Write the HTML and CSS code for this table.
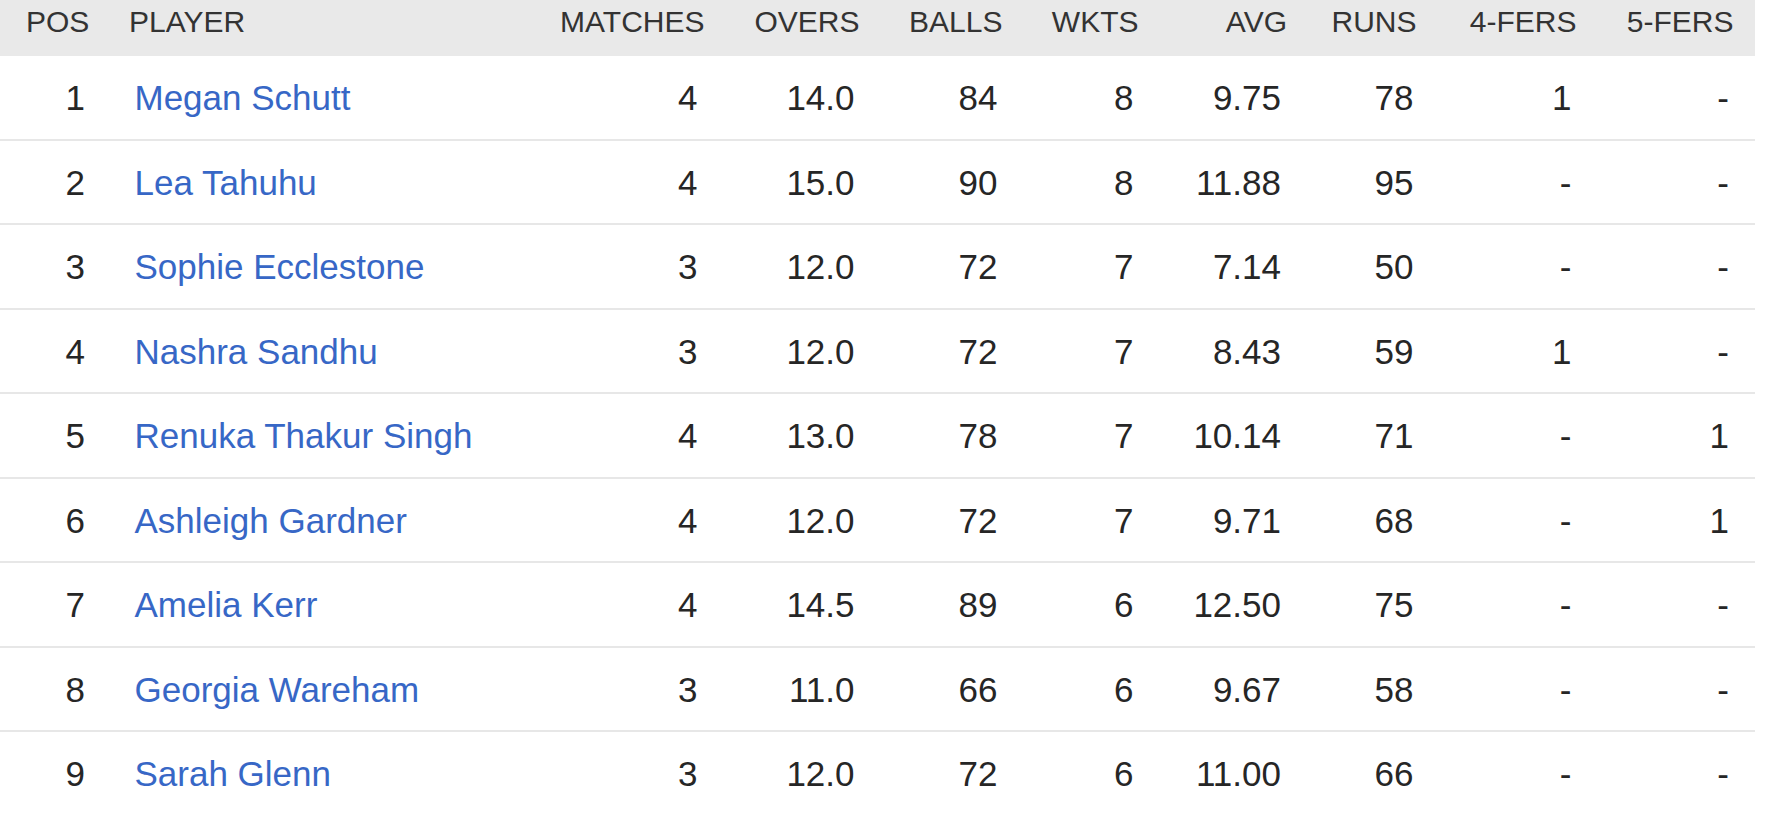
FILE: index.html
```html
<!DOCTYPE html>
<html lang="en">
<head>
<meta charset="utf-8">
<title>Most Wickets</title>
<link rel="stylesheet" href="styles.css">
</head>
<body>
<table class="stats">
  <colgroup>
    <col class="c-pos">
    <col class="c-player">
    <col class="c-matches">
    <col class="c-overs">
    <col class="c-balls">
    <col class="c-wkts">
    <col class="c-avg">
    <col class="c-runs">
    <col class="c-four">
    <col class="c-five">
  </colgroup>
  <thead>
    <tr>
      <th class="h-pos">POS</th>
      <th class="h-player">PLAYER</th>
      <th>MATCHES</th>
      <th>OVERS</th>
      <th>BALLS</th>
      <th>WKTS</th>
      <th>AVG</th>
      <th>RUNS</th>
      <th>4-FERS</th>
      <th class="last">5-FERS</th>
    </tr>
  </thead>
  <tbody>
    <tr><td class="pos">1</td><td class="player"><a href="#">Megan Schutt</a></td><td>4</td><td>14.0</td><td>84</td><td>8</td><td>9.75</td><td>78</td><td>1</td><td class="last">-</td></tr>
    <tr><td class="pos">2</td><td class="player"><a href="#">Lea Tahuhu</a></td><td>4</td><td>15.0</td><td>90</td><td>8</td><td>11.88</td><td>95</td><td>-</td><td class="last">-</td></tr>
    <tr><td class="pos">3</td><td class="player"><a href="#">Sophie Ecclestone</a></td><td>3</td><td>12.0</td><td>72</td><td>7</td><td>7.14</td><td>50</td><td>-</td><td class="last">-</td></tr>
    <tr><td class="pos">4</td><td class="player"><a href="#">Nashra Sandhu</a></td><td>3</td><td>12.0</td><td>72</td><td>7</td><td>8.43</td><td>59</td><td>1</td><td class="last">-</td></tr>
    <tr><td class="pos">5</td><td class="player"><a href="#">Renuka Thakur Singh</a></td><td>4</td><td>13.0</td><td>78</td><td>7</td><td>10.14</td><td>71</td><td>-</td><td class="last">1</td></tr>
    <tr><td class="pos">6</td><td class="player"><a href="#">Ashleigh Gardner</a></td><td>4</td><td>12.0</td><td>72</td><td>7</td><td>9.71</td><td>68</td><td>-</td><td class="last">1</td></tr>
    <tr><td class="pos">7</td><td class="player"><a href="#">Amelia Kerr</a></td><td>4</td><td>14.5</td><td>89</td><td>6</td><td>12.50</td><td>75</td><td>-</td><td class="last">-</td></tr>
    <tr><td class="pos">8</td><td class="player"><a href="#">Georgia Wareham</a></td><td>3</td><td>11.0</td><td>66</td><td>6</td><td>9.67</td><td>58</td><td>-</td><td class="last">-</td></tr>
    <tr><td class="pos">9</td><td class="player"><a href="#">Sarah Glenn</a></td><td>3</td><td>12.0</td><td>72</td><td>6</td><td>11.00</td><td>66</td><td>-</td><td class="last">-</td></tr>
  </tbody>
</table>
</body>
</html>
```

FILE: styles.css
```css
html, body {
  margin: 0;
  padding: 0;
  background: #ffffff;
}

body {
  font-family: "Liberation Sans", Arial, sans-serif;
  color: #2b2b2b;
}

.stats {
  width: 1755px;
  table-layout: fixed;
  border-collapse: collapse;
  border-spacing: 0;
}

.c-pos { width: 120px; }
.c-player { width: 420px; }
.c-matches { width: 164.5px; }
.c-overs { width: 155px; }
.c-balls { width: 143px; }
.c-wkts { width: 136px; }
.c-avg { width: 148.5px; }
.c-runs { width: 129.5px; }
.c-four { width: 160px; }
.c-five { width: 178.5px; }

.stats thead tr {
  background: #e9e9e9;
}

.stats th {
  font-size: 30px;
  font-weight: normal;
  color: #333333;
  line-height: 33px;
  padding: 4.6px 0 18.9px 0;
  text-align: right;
  white-space: nowrap;
  vertical-align: top;
}

.stats th.h-pos {
  text-align: left;
  padding-left: 26px;
}

.stats th.h-player {
  text-align: left;
  padding-left: 9px;
}

.stats th.last {
  padding-right: 21.5px;
}

.stats td {
  font-size: 35px;
  line-height: 40px;
  color: #262626;
  text-align: right;
  padding: 22px 5px 20.44px 0;
  border-bottom: 2px solid #e7e7e7;
  white-space: nowrap;
  vertical-align: middle;
}

.stats td.pos {
  padding-right: 35px;
}

.stats td.player {
  text-align: left;
  padding-left: 14.5px;
  padding-right: 0;
}

.stats td:nth-child(3) {
  padding-right: 7px;
}

.stats td:nth-child(7) {
  padding-right: 6px;
}

.stats td:nth-child(8) {
  padding-right: 3px;
}

.stats td.last {
  padding-right: 26px;
}

.stats tbody tr:last-child td {
  border-bottom: none;
}

.player a {
  color: #3767c6;
  text-decoration: none;
}
```
